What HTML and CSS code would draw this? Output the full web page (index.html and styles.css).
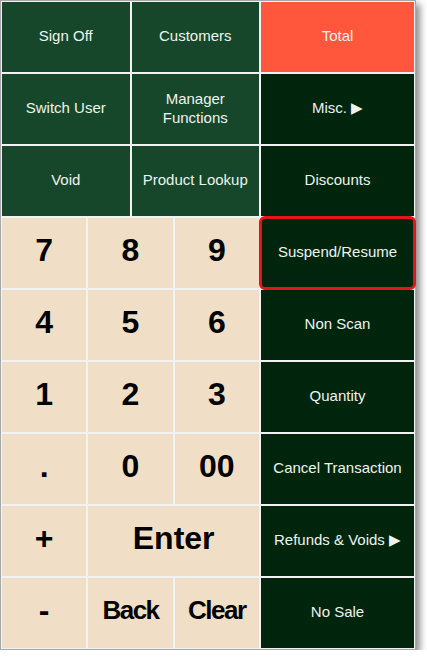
FILE: index.html
```html
<!DOCTYPE html>
<html>
<head>
<meta charset="utf-8">
<link rel="stylesheet" href="styles.css">
</head>
<body>
<div class="frame">
  <div class="pad">
    <div class="btn fn w3">Sign Off</div>
    <div class="btn fn w3">Customers</div>
    <div class="btn total">Total</div>

    <div class="btn fn w3">Switch User</div>
    <div class="btn fn w3">Manager<br>Functions</div>
    <div class="btn side">Misc. ▶</div>

    <div class="btn fn w3">Void</div>
    <div class="btn fn w3">Product Lookup</div>
    <div class="btn side">Discounts</div>

    <div class="btn key w2">7</div>
    <div class="btn key w2">8</div>
    <div class="btn key w2">9</div>
    <div class="btn side hl">Suspend/Resume</div>

    <div class="btn key w2">4</div>
    <div class="btn key w2">5</div>
    <div class="btn key w2">6</div>
    <div class="btn side">Non Scan</div>

    <div class="btn key w2">1</div>
    <div class="btn key w2">2</div>
    <div class="btn key w2">3</div>
    <div class="btn side">Quantity</div>

    <div class="btn key w2">.</div>
    <div class="btn key w2">0</div>
    <div class="btn key w2">00</div>
    <div class="btn side">Cancel Transaction</div>

    <div class="btn key w2">+</div>
    <div class="btn key w4">Enter</div>
    <div class="btn side">Refunds &amp; Voids ▶</div>

    <div class="btn key w2">-</div>
    <div class="btn key w2 word">Back</div>
    <div class="btn key w2 word">Clear</div>
    <div class="btn side">No Sale</div>
  </div>
</div>
</body>
</html>
```
FILE: styles.css
```css
html, body {
  margin: 0;
  padding: 0;
  background: #ffffff;
}

.frame {
  width: 416px;
  height: 650px;
  box-sizing: border-box;
  border: 1px solid #a8a8a8;
  background: #f2f2f2;
  box-shadow: 4px 4px 7px rgba(0, 0, 0, 0.45);
}

.pad {
  box-sizing: border-box;
  width: 100%;
  height: 100%;
  padding: 1px;
  display: grid;
  grid-template-columns: repeat(6, 1fr) 153px;
  grid-template-rows: repeat(9, 1fr);
  gap: 2px;
}

.btn {
  display: flex;
  align-items: center;
  justify-content: center;
  text-align: center;
  font-family: "Liberation Sans", Arial, sans-serif;
  font-size: 15px;
  line-height: 19px;
  color: #eef3ee;
  position: relative;
  padding-bottom: 3px;
}

.w2 { grid-column: span 2; }
.w3 { grid-column: span 3; }
.w4 { grid-column: span 4; }

.fn {
  background: #17472a;
}

.side {
  background: #00250d;
}

.total {
  background: #ff573b;
}

.key {
  background: #f0dfc6;
  color: #000000;
  font-weight: bold;
  font-size: 32px;
  padding-bottom: 5px;
}

.key.word {
  font-size: 26px;
  letter-spacing: -1.5px;
}

.hl::after {
  content: "";
  position: absolute;
  left: -2px;
  top: -2px;
  right: -2px;
  bottom: -2px;
  border: 3px solid #e3141c;
  border-radius: 6px;
}
```
